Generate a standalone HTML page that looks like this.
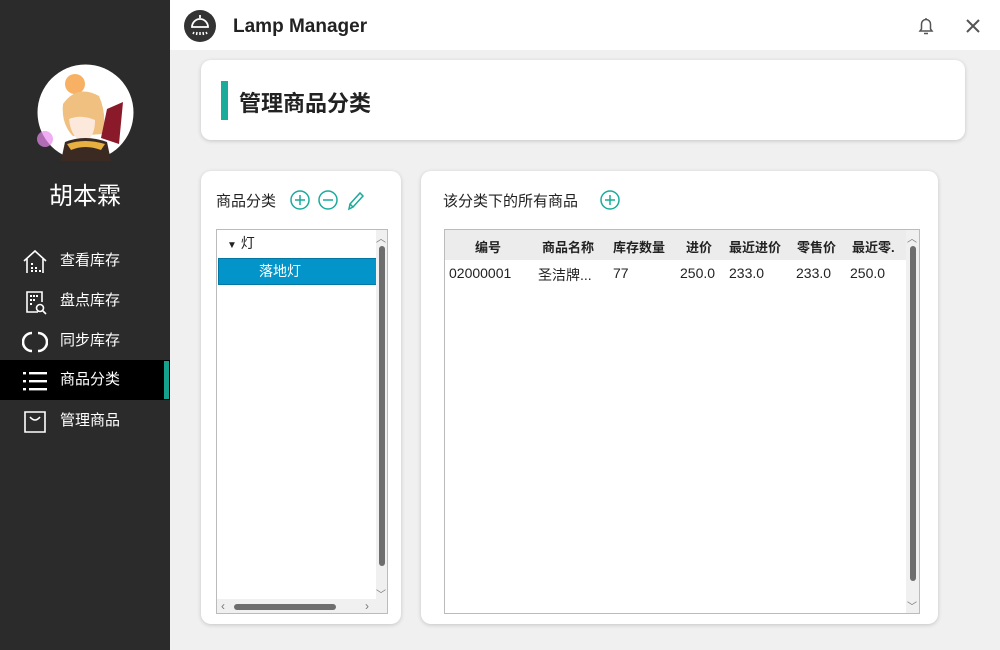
<!DOCTYPE html>
<html><head><meta charset="utf-8"><style>
*{margin:0;padding:0;box-sizing:border-box}
body{width:1000px;height:650px;overflow:hidden;background:#f0f0f0;font-family:"Liberation Sans","Noto Sans CJK SC",sans-serif;position:relative}
.side{position:absolute;left:0;top:0;width:170px;height:650px;background:#2b2b2b;color:#fff}
.top{position:absolute;left:170px;top:0;width:830px;height:50px;background:#fff}
.card{position:absolute;background:#fff;border-radius:10px;box-shadow:0 1px 4px rgba(0,0,0,.18)}
.mi{position:absolute;left:0;width:170px;height:40px;font-size:15px;line-height:40px;padding-left:60px}
.mi svg{position:absolute;left:22px;top:8px}
.th{position:absolute;top:7px;font-size:13px;font-weight:bold;color:#222}
.td{position:absolute;top:35px;font-size:14px;color:#222}
.ar{position:absolute;font-size:10px;color:#777}
</style></head><body>
<div class="side">
 <svg style="position:absolute;left:37px;top:64px" width="97" height="97" viewBox="0 0 97 97">
  <circle cx="48.5" cy="48.5" r="48" fill="#fff"/>
  <circle cx="38" cy="20" r="10" fill="#f7a24a" opacity=".85"/>
  <circle cx="8" cy="75" r="8" fill="#e98af0" opacity=".7"/>
  <path d="M26 40 Q40 20 62 32 Q70 50 66 70 L36 72 Q24 60 26 40Z" fill="#f0c080"/>
  <path d="M32 55 Q44 50 58 56 Q58 75 46 78 Q34 74 32 55Z" fill="#fde9dc"/>
  <path d="M70 45 L86 38 L82 80 L64 74Z" fill="#8a1a2a"/>
  <path d="M24 97 L28 78 Q48 70 70 78 L74 97Z" fill="#3a2a22"/>
  <path d="M30 80 Q48 74 68 80 L64 86 Q48 80 34 86Z" fill="#e8b040"/>
 </svg>
 <div style="position:absolute;left:0;width:170px;top:176px;text-align:center;font-size:24px">胡本霖</div>
 <div class="mi" style="top:241px"><svg width="26" height="26" viewBox="0 0 26 26" fill="none" stroke="#fff" stroke-width="1.6"><path d="M2 12 L13 2 L24 12 M5 10 V24 M21 10 V24"/><g fill="#fff" stroke="none"><rect x="9" y="14" width="2" height="2"/><rect x="9" y="18" width="2" height="2"/><rect x="9" y="21" width="2" height="2"/><rect x="13" y="18" width="2" height="2"/><rect x="13" y="21" width="2" height="2"/><rect x="17" y="21" width="2" height="2"/></g></svg>查看库存</div>
 <div class="mi" style="top:281px"><svg width="26" height="26" viewBox="0 0 26 26" fill="none" stroke="#fff" stroke-width="1.6"><path d="M16 23 H5 V3 H20 V13"/><g fill="#fff" stroke="none"><rect x="8" y="6" width="2" height="2"/><rect x="11" y="6" width="2" height="2"/><rect x="14" y="6" width="2" height="2"/><rect x="8" y="10" width="2" height="2"/><rect x="11" y="10" width="2" height="2"/><rect x="8" y="14" width="2" height="2"/></g><circle cx="18" cy="19" r="3.5"/><path d="M20.5 21.5 L24 25"/></svg>盘点库存</div>
 <div class="mi" style="top:321px"><svg width="26" height="26" viewBox="0 0 26 26" fill="none" stroke="#fff" stroke-width="2.6"><path d="M10 4 A9 9 0 0 0 10 22"/><path d="M16 4 A9 9 0 0 1 16 22"/></svg>同步库存</div>
 <div class="mi" style="top:360px;background:#000"><svg width="26" height="26" viewBox="0 0 26 26" fill="#fff"><rect x="1" y="4" width="3" height="2.4"/><rect x="7" y="4" width="18" height="2.4"/><rect x="1" y="12" width="3" height="2.4"/><rect x="7" y="12" width="18" height="2.4"/><rect x="1" y="20" width="3" height="2.4"/><rect x="7" y="20" width="18" height="2.4"/></svg>商品分类<div style="position:absolute;left:164px;top:1px;width:5px;height:38px;background:#16a08e"></div></div>
 <div class="mi" style="top:401px"><svg width="26" height="26" viewBox="0 0 26 26" fill="none" stroke="#fff" stroke-width="1.6"><path d="M3 3 H23 V23 H3Z"/><path d="M8 8 Q13 14 18 8"/></svg>管理商品</div>
</div>
<div class="top">
 <svg style="position:absolute;left:14px;top:10px" width="32" height="32" viewBox="0 0 32 32"><circle cx="16" cy="16" r="16" fill="#333"/><path d="M16 5 V8 M8 17 A8 8 0 0 1 24 17 Z" stroke="#fff" stroke-width="1.8" fill="none"/><path d="M10 22 L9 24 M13 22 L12.5 25 M16 22 V25 M19 22 L19.5 25 M22 22 L23 24" stroke="#fff" stroke-width="1.5"/></svg>
 <div style="position:absolute;left:63px;top:16px;font-size:19px;font-weight:bold;color:#222">Lamp Manager</div>
 <svg style="position:absolute;left:746px;top:16px" width="20" height="20" viewBox="0 0 20 20" fill="none" stroke="#555" stroke-width="1.5"><path d="M4 15 H16 L14.5 13 V8 A4.5 4.5 0 0 0 5.5 8 V13Z M8 17.5 H12 M10 2 V3.5"/></svg>
 <svg style="position:absolute;left:795px;top:18px" width="16" height="16" viewBox="0 0 16 16" stroke="#555" stroke-width="2"><path d="M2 2 L14 14 M14 2 L2 14"/></svg>
</div>
<div class="card" style="left:201px;top:60px;width:764px;height:80px">
 <div style="position:absolute;left:20px;top:21px;width:7px;height:39px;background:#1aab9b"></div>
 <div style="position:absolute;left:38px;top:26px;font-size:22px;font-weight:bold;color:#222">管理商品分类</div>
</div>
<div class="card" style="left:201px;top:171px;width:200px;height:453px">
 <div style="position:absolute;left:15px;top:19px;font-size:15px;color:#222">商品分类</div>
 <svg style="position:absolute;left:89px;top:19px" width="74" height="22" viewBox="0 0 74 22" fill="none" stroke="#1aab9b" stroke-width="1.5"><circle cx="10" cy="10" r="9"/><path d="M10 5 V15 M5 10 H15"/><circle cx="38" cy="10" r="9"/><path d="M33 10 H43"/><path d="M59 19 L60 14 L70 3 L73 6 L63 17 Z M60 14 L63 17"/></svg>
 <div style="position:absolute;left:15px;top:58px;width:172px;height:385px;border:1px solid #bbb;background:#fff">
  <div style="position:absolute;left:10px;top:3px;font-size:14px;color:#222"><span style="font-size:10px">▼</span> 灯</div>
  <div style="position:absolute;left:1px;top:28px;width:160px;height:27px;background:#0395c9;border:1px solid #0277a4;color:#fff;font-size:14px;line-height:25px;padding-left:40px">落地灯</div>
  <div style="position:absolute;right:0;top:0;width:11px;height:370px;background:#f0f0f0"></div>
  <div class="ar" style="right:1px;top:0">︿</div><div class="ar" style="right:1px;top:356px">﹀</div>
  <div style="position:absolute;right:2px;top:16px;width:6px;height:320px;background:#6e6e6e;border-radius:3px"></div>
  <div style="position:absolute;left:0;bottom:0;width:170px;height:14px;background:#f0f0f0"></div>
  <div class="ar" style="left:4px;bottom:0;font-size:12px">‹</div><div class="ar" style="left:148px;bottom:0;font-size:12px">›</div>
  <div style="position:absolute;left:17px;bottom:3px;width:102px;height:6px;background:#6e6e6e;border-radius:3px"></div>
 </div>
</div>
<div class="card" style="left:421px;top:171px;width:517px;height:453px">
 <div style="position:absolute;left:22px;top:19px;font-size:15px;color:#222">该分类下的所有商品</div>
 <svg style="position:absolute;left:179px;top:19px" width="22" height="22" viewBox="0 0 22 22" fill="none" stroke="#1aab9b" stroke-width="1.5"><circle cx="10" cy="10" r="9"/><path d="M10 5 V15 M5 10 H15"/></svg>
 <div style="position:absolute;left:23px;top:58px;width:476px;height:385px;border:1px solid #bbb;background:#fff;overflow:hidden">
  <div style="position:absolute;left:0;top:0;width:462px;height:30px;background:#ececec"></div>
  <div class="th" style="left:30px">编号</div><div class="th" style="left:97px">商品名称</div><div class="th" style="left:168px">库存数量</div><div class="th" style="left:241px">进价</div><div class="th" style="left:284px">最近进价</div><div class="th" style="left:352px">零售价</div><div class="th" style="left:407px">最近零.</div>
  <div class="td" style="left:4px">02000001</div><div class="td" style="left:93px">圣洁牌...</div><div class="td" style="left:168px">77</div><div class="td" style="left:235px">250.0</div><div class="td" style="left:284px">233.0</div><div class="td" style="left:351px">233.0</div><div class="td" style="left:405px">250.0</div>
  <div style="position:absolute;right:0;top:0;width:13px;height:385px;background:#f0f0f0"></div>
  <div class="ar" style="right:2px;top:0">︿</div><div class="ar" style="right:2px;top:368px">﹀</div>
  <div style="position:absolute;right:3px;top:16px;width:6px;height:335px;background:#6e6e6e;border-radius:3px"></div>
 </div>
</div>
</body></html>
